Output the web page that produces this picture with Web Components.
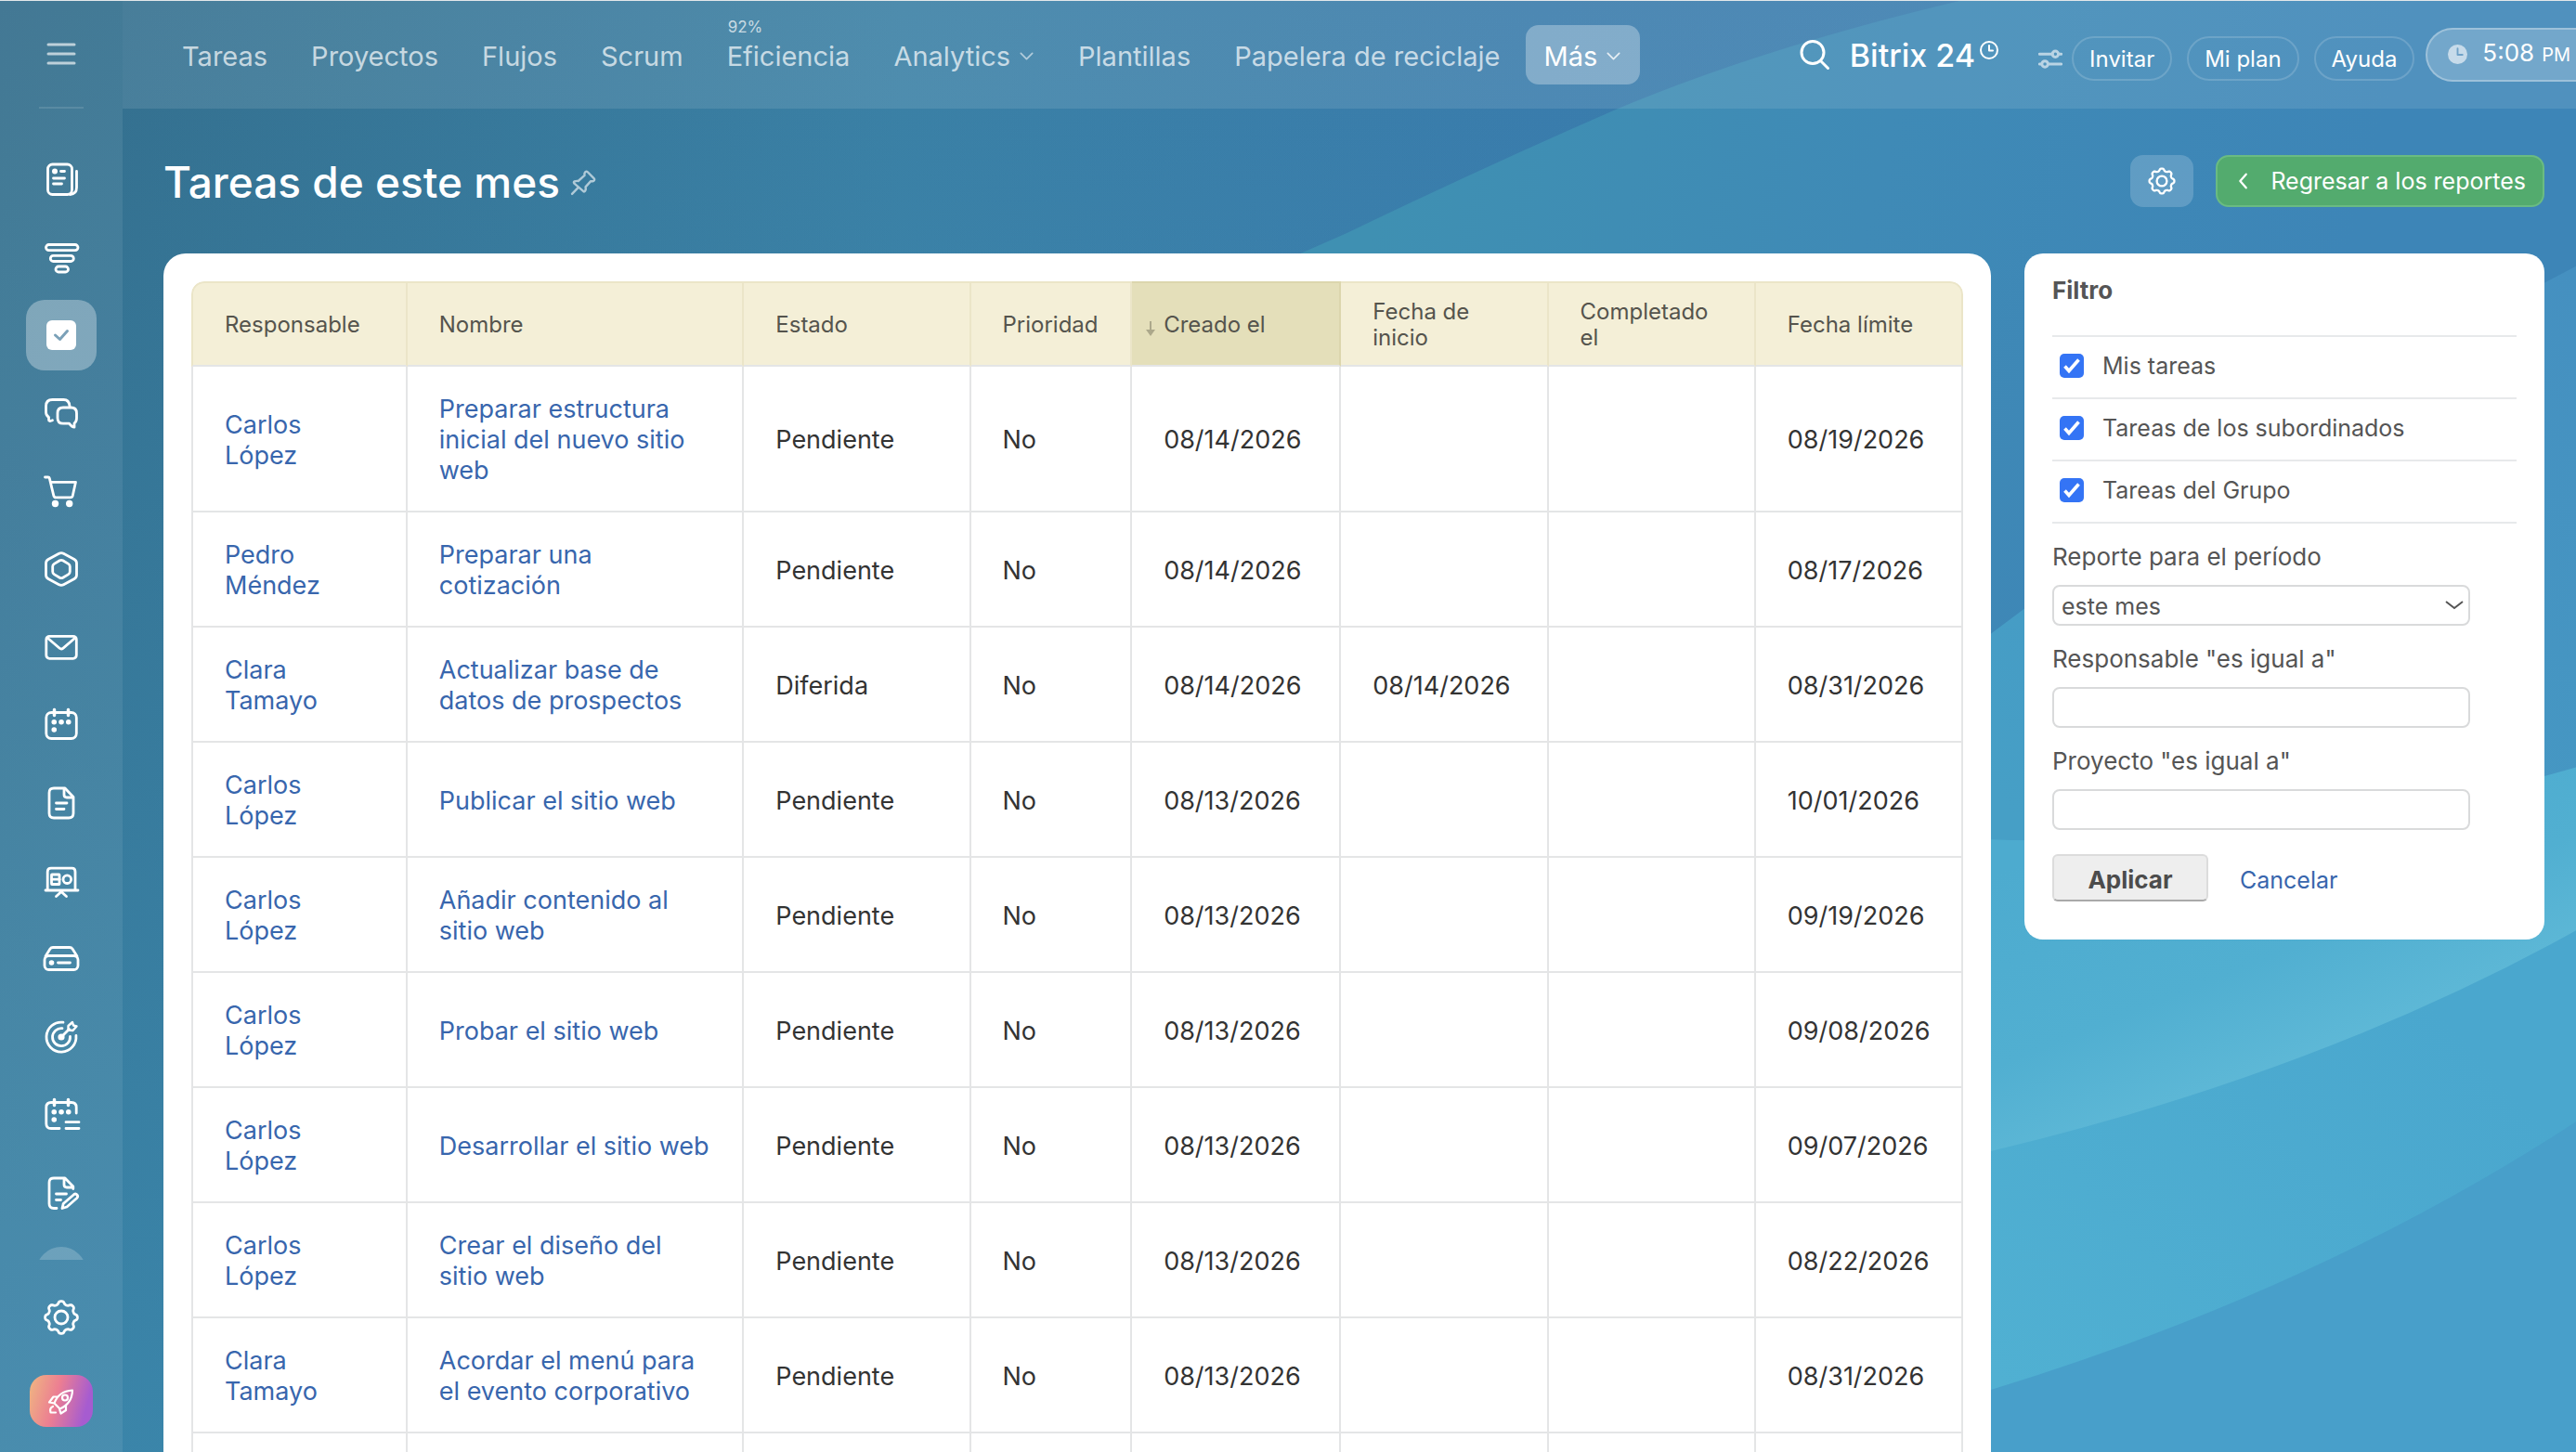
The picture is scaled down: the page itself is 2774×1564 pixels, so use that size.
<!DOCTYPE html>
<html lang="es">
<head>
<meta charset="utf-8">
<title>Tareas de este mes</title>
<style>
  html, body {
    margin: 0;
    height: 100%;
    overflow: hidden;
  }
  body {
    font-family: Inter, "Liberation Sans", sans-serif;
    color: #333;
    background: #3a7fa6;
  }
</style>
</head>
<body>
<app-shell>
  <side-menu slot="side"></side-menu>
  <top-bar slot="top"></top-bar>
  <page-title slot="title">Tareas de este mes</page-title>
  <task-report slot="report"></task-report>
  <report-filter slot="filter"></report-filter>
</app-shell>

<script>
  // closed outline of a cog with eight soft teeth
  function cogPath(cx, cy, r, depth) {
    const points = [];
    for (let i = 0; i < 160; i++) {
      const t = (i / 160) * Math.PI * 2;
      const k = r + depth * Math.tanh(1.6 * Math.cos(8 * t));
      points.push(`${(cx + k * Math.sin(t)).toFixed(2)} ${(cy - k * Math.cos(t)).toFixed(2)}`);
    }
    return `M${points.join("L")}Z`;
  }

  const ICONS = {
    menu: '<path d="M8 12h28M8 22h28M8 32h28" stroke-width="3"/>',
    feed: '<rect x="7.500" y="6" width="26" height="32.500" rx="5"/><path d="M38.500 13.500V31q0 7-7 7.500"/><circle cx="15" cy="13.500" r="3" class="f"/><path d="M21.500 13.500h4M13.500 21h12M13.500 27h9"/>',
    crm: '<rect x="5.500" y="8.500" width="34.500" height="6.200" rx="3.100"/><rect x="10.300" y="20.300" width="25" height="6.200" rx="3.100"/><rect x="16" y="32" width="13.500" height="6" rx="3"/>',
    tasks: '<rect x="6" y="6" width="32" height="32" rx="6" class="f"/><path d="M15.500 22l5 4.500 8-9" stroke="#7ba1b8" stroke-width="3"/>',
    chat: '<path d="M31 14.500Q30.500 7.500 24.500 7.500H12.500Q5.500 7.500 5.500 14.500V21Q5.500 24.500 8.500 26.500V29Q8.500 31.500 12.500 29.800"/><path d="M24 16h8.500q6 0 6 6v5.500q0 3.500-2.500 5.500v4.200q-2.500 0-5.500-4H24q-6 0-6-6V22q0-6 6-6z"/>',
    cart: '<path d="M4.500 7h3.300q1.200 0 1.500 1.200l4.500 18.600q.5 2 2.500 2h15.500q2 0 2.500-2l3.200-14.500H10.500"/><circle cx="15.500" cy="35.500" r="3.700" class="f"/><circle cx="30.700" cy="35.500" r="3.700" class="f"/>',
    hex: '<path d="M19.500 5.300q2.500-1.300 5 0L36 11.500q2.500 1.400 2.500 4.200v12.600q0 2.800-2.500 4.200L24.500 38.700q-2.500 1.300-5 0L8 32.500q-2.500-1.400-2.500-4.200V15.700q0-2.800 2.500-4.200z"/><path d="M20.300 12.800q1.700-1 3.400 0l6 3.600q1.600 1 1.600 2.800v5.600q0 1.800-1.600 2.800l-6 3.600q-1.700 1-3.400 0l-6-3.600q-1.600-1-1.600-2.800v-5.600q0-1.800 1.600-2.800z"/>',
    mail: '<rect x="5.800" y="10.300" width="32.500" height="24" rx="3.500"/><path d="M7 12l13.200 11.300q1.800 1.500 3.600 0L37 12"/>',
    calendar: '<rect x="5.800" y="8.500" width="32.500" height="28" rx="5.500"/><path d="M14.500 5.500v6M29.500 5.500v6" stroke-width="3.500"/><path d="M14.200 18.700h.1M22 18.700h.1M29.700 18.700h.1M14.200 27h.1" stroke-width="5.500"/>',
    doc: '<path d="M14 6h12l9 9.500V33q0 5-5 5H14q-5 0-5-5V11q0-5 5-5z"/><path d="M25 7v6q0 3 3 3h6.500M16.500 22h11.500M16.500 28.500h8.500"/>',
    board: '<path d="M7.200 31V12q0-3.800 3.800-3.800h22.500q3.500 0 3.500 3.800V31M5 32h35M22 33.500l-5.500 5M22 33.500l5.500 5"/><rect x="11.500" y="15" width="8.500" height="10.500" rx=".500"/><path d="M12 20.200h8"/><circle cx="28.300" cy="20.200" r="4.300"/>',
    drive: '<path d="M5 19l5-8q1-1.500 3-1.500h18q2 0 3 1.500l5 8"/><rect x="4" y="18.500" width="36" height="15" rx="4.500"/><circle cx="11.500" cy="26" r="2.800" class="f"/><path d="M18.500 26h13"/>',
    target: '<path d="M24 6.200A16 16 0 1 0 37.900 20.500M23 12.700A9.500 9.500 0 1 0 31.500 21.500M23 21l7.500-7.500"/><circle cx="22" cy="22" r="3.600" class="f"/><path d="M29.500 14.500V10l4.500-4 1 3.500 3.500 1-4 4.500z" stroke-width="2.400"/>',
    plan: '<path d="M20 36.500h-9q-5.200 0-5.200-5.300V13.700Q5.800 8.500 11 8.500h22q5.200 0 5.200 5.200V20M27 29.700h14M27 36.500h14"/><path d="M14.500 5.500v6M29.500 5.500v6" stroke-width="3.500"/><path d="M14.200 18.700h.1M22 18.700h.1M29.700 18.700h.1M14.200 27h.1" stroke-width="5.500"/>',
    sign: '<path d="M17 38.500h-3q-5 0-5-5V11q0-5 5-5h12l8.800 9v2.500M25 7v6q0 3 3 3h6M16.500 23h11M16.500 29.500h5"/><path d="M23 38.500l1.200-5 11.300-9.800q2-1.500 3.500.3t-.2 3.500L28 37z"/>',
    cog: `<path d="${cogPath(22, 22, 15.8, 1.7)}"/><circle cx="22" cy="22" r="7"/>`,
    rocket: '<path d="M14.500 24.500Q19 11.500 34 10.500 33.500 25 20.500 30.500zM18.500 17.500h-5l-4.500 6 5.500 1M27 26.500v5.500l-5.500 3.500-1.500-5M13 28q-4 1.500-2.500 6.500h5.500"/><circle cx="26" cy="18.500" r="3"/>',
    pin: '<path d="M9.800 22.800q-1.500-1.700.3-2.600 2.200-1 4.600-.5L22.600 12.700q-.6-2.300.5-3.900 1.500-2.100 3.300-.4l7.800 7.900q1.700 1.900-.5 3.200-1.600.8-3.400.4L23.800 27q.7 2.600-.4 4.800-1 2-2.500.5zM14.500 28L7 35.800"/>',
    search: '<circle cx="20" cy="19.500" r="12"/><path d="M28.500 28.500l8 8"/>',
    clock: '<circle cx="22" cy="22" r="18"/><path d="M22 12v11h8"/>',
    clockSolid: '<circle cx="22" cy="22" r="22" class="f"/><path d="M22 9v14h11" stroke="#6f9fc7" stroke-width="4"/>',
    sliders: '<path d="M2 14h24M38 14h4M2 32h4M18 32h24"/><circle cx="31" cy="14" r="5.500"/><circle cx="12" cy="32" r="5.500"/>',
    down: '<path d="M6 14l16 16 16-16"/>',
    left: '<path d="M28 6L14 22l14 16"/>'
  };

  class UiIcon extends HTMLElement {
    constructor() {
      super();
      this.attachShadow({ mode: "open" });
    }

    connectedCallback() {
      this.shadowRoot.innerHTML = `
        <style>
          :host { display: inline-block; flex: none; width: 44px; height: 44px; }
          svg {
            display: block;
            width: 100%;
            height: 100%;
            fill: none;
            stroke: currentColor;
            stroke-width: var(--stroke, 2.8);
            stroke-linecap: round;
            stroke-linejoin: round;
          }
          .f { fill: currentColor; stroke: none; }
        </style>
        <svg viewBox="0 0 44 44" aria-hidden="true">${ICONS[this.getAttribute("name")] || ""}</svg>
      `;
    }
  }

  class PageBackdrop extends HTMLElement {
    constructor() {
      super();
      this.attachShadow({ mode: "open" });
    }

    connectedCallback() {
      this.shadowRoot.innerHTML = `
        <style>
          :host { display: block; }
          svg { display: block; width: 100%; height: 100%; }
        </style>
        <svg viewBox="0 0 2774 1564" preserveAspectRatio="none" aria-hidden="true">
          <defs>
            <linearGradient id="base" x1="0" y1="0" x2="1" y2="0">
              <stop offset="0" stop-color="#336d8b"/>
              <stop offset=".35" stop-color="#3a7fa4"/>
              <stop offset=".6" stop-color="#397bab"/>
              <stop offset="1" stop-color="#3b80b4"/>
            </linearGradient>
            <linearGradient id="low" x1="0" y1="0" x2="0" y2="1">
              <stop offset="0" stop-color="#419ac4" stop-opacity="0"/>
              <stop offset="1" stop-color="#419ac4" stop-opacity=".5"/>
            </linearGradient>
            <linearGradient id="sweep" gradientUnits="userSpaceOnUse" x1="1500" y1="150" x2="2500" y2="400">
              <stop offset="0" stop-color="#3f90b2"/>
              <stop offset=".5" stop-color="#3f8ab6"/>
              <stop offset="1" stop-color="#3d85b7"/>
            </linearGradient>
            <linearGradient id="mid" gradientUnits="userSpaceOnUse" x1="2144" y1="850" x2="2774" y2="300">
              <stop offset="0" stop-color="#469fc6"/>
              <stop offset="1" stop-color="#4590c0"/>
            </linearGradient>
            <linearGradient id="sea" gradientUnits="userSpaceOnUse" x1="2300" y1="880" x2="2420" y2="1180">
              <stop offset="0" stop-color="#4dabcf"/>
              <stop offset=".6" stop-color="#51afd1"/>
              <stop offset="1" stop-color="#5fb9d7"/>
            </linearGradient>
            <linearGradient id="deep" gradientUnits="userSpaceOnUse" x1="2144" y1="1480" x2="2600" y2="1060">
              <stop offset="0" stop-color="#50b0d2"/>
              <stop offset="1" stop-color="#4aa7ce"/>
            </linearGradient>
          </defs>
          <rect width="2774" height="1564" fill="url(#base)"/>
          <rect width="2774" height="1564" fill="url(#low)"/>
          <path d="M1360 290L1451 250Q1600 178 1740 117 1900 50 2110 0H2774V1564H1360Z" fill="url(#sweep)"/>
          <path d="M2100 716Q2400 480 2774 286V1564H2100Z" fill="url(#mid)"/>
          <path d="M2100 902Q2450 920 2774 826V1564H2100Z" fill="url(#sea)"/>
          <path d="M2100 1250Q2480 1165 2774 1002V1564H2100Z" fill="url(#deep)"/>
          <path d="M2100 1510Q2480 1400 2774 1208V1564H2100Z" fill="#489fca"/>
        </svg>
      `;
    }
  }

  class AppShell extends HTMLElement {
    constructor() {
      super();
      this.attachShadow({ mode: "open" });
    }

    connectedCallback() {
      this.shadowRoot.innerHTML = `
        <style>
          :host {
            display: flex;
            position: relative;
            box-sizing: border-box;
            height: 100vh;
            overflow: hidden;
            border-top: 1px solid #e3e7ea;
          }
          page-backdrop { position: absolute; inset: 0; z-index: -1; }
          main { flex: 1; min-width: 0; }
          .content { padding: 50px 34px 0 44px; }
          .columns { display: flex; align-items: flex-start; gap: 36px; margin-top: 50px; }
          slot[name="report"]::slotted(*) { flex: 1; min-width: 0; }
          slot[name="filter"]::slotted(*) { flex: none; }
        </style>
        <page-backdrop></page-backdrop>
        <slot name="side"></slot>
        <main>
          <slot name="top"></slot>
          <div class="content">
            <slot name="title"></slot>
            <div class="columns">
              <slot name="report"></slot>
              <slot name="filter"></slot>
            </div>
          </div>
        </main>
      `;
    }
  }

  class SideMenu extends HTMLElement {
    constructor() {
      super();
      this.attachShadow({ mode: "open" });
      this.items = [
        ["feed", "Noticias"], ["crm", "CRM"], ["tasks", "Tareas"], ["chat", "Chat"],
        ["cart", "Tienda"], ["hex", "Automatización"], ["mail", "Correo"],
        ["calendar", "Calendario"], ["doc", "Documentos"], ["board", "Pizarras"],
        ["drive", "Drive"], ["target", "Marketing"], ["plan", "Reservas"], ["sign", "Firma"]
      ];
    }

    connectedCallback() {
      this.shadowRoot.innerHTML = `
        <style>
          :host {
            display: flex;
            flex-direction: column;
            align-items: center;
            box-sizing: border-box;
            flex: none;
            width: 132px;
            padding-bottom: 27px;
            color: #fff;
            background: rgba(255, 255, 255, .08);
          }
          button { padding: 0; border: 0; color: inherit; background: none; }
          .toggle { height: 114px; padding-top: 3px; opacity: .65; }
          hr { width: 48px; height: 2px; margin: 0 0 38px; border: 0; background: rgba(255, 255, 255, .12); }
          nav { display: flex; flex-direction: column; gap: 8px; }
          nav a {
            display: flex;
            align-items: center;
            justify-content: center;
            width: 76px;
            height: 76px;
            border-radius: 20px;
            color: inherit;
          }
          nav a.active { background: rgba(255, 255, 255, .32); }
          .more { width: 54px; height: 14px; margin-top: 20px; overflow: hidden; }
          .more span { display: block; width: 54px; height: 54px; border-radius: 50%; background: rgba(255, 255, 255, .2); }
          .bottom { display: flex; flex-direction: column; align-items: center; gap: 40px; margin-top: auto; }
          .bottom button { display: block; height: 44px; }
          .bottom .launch {
            display: flex;
            align-items: center;
            justify-content: center;
            width: 68px;
            height: 56px;
            border-radius: 18px;
            background: linear-gradient(105deg, #efb083 5%, #ec7e92 42%, #a65cd0 85%);
          }
          .launch ui-icon { --stroke: 2.2; }
        </style>
        <button class="toggle" aria-label="Menú"><ui-icon name="menu"></ui-icon></button>
        <hr>
        <nav>
          ${this.items.map(([icon, label]) => `
            <a href="#${icon}" aria-label="${label}" class="${icon === "tasks" ? "active" : ""}">
              <ui-icon name="${icon}"></ui-icon>
            </a>`).join("")}
        </nav>
        <div class="more"><span></span></div>
        <div class="bottom">
          <button aria-label="Ajustes"><ui-icon name="cog"></ui-icon></button>
          <button class="launch" aria-label="Novedades"><ui-icon name="rocket"></ui-icon></button>
        </div>
      `;
    }
  }

  class NavItem extends HTMLElement {
    constructor() {
      super();
      this.attachShadow({ mode: "open" });
    }

    connectedCallback() {
      const badge = this.getAttribute("badge");
      this.shadowRoot.innerHTML = `
        <style>
          :host { display: block; flex: none; }
          a {
            display: flex;
            align-items: center;
            gap: 9px;
            position: relative;
            box-sizing: border-box;
            height: 64px;
            padding: 2px 20px 0;
            border-radius: 14px;
            font-size: 29px;
            white-space: nowrap;
            text-decoration: none;
            color: rgba(255, 255, 255, .7);
          }
          :host([active]) a { color: #fff; background: rgba(255, 255, 255, .3); }
          ui-icon { width: 17px; height: 17px; --stroke: 4.5; opacity: .8; }
          small { position: absolute; left: 21px; top: -10px; font-size: 17px; line-height: 24px; }
        </style>
        <a href="#">
          ${badge ? `<small>${badge}</small>` : ""}
          <slot></slot>
          ${this.hasAttribute("menu") ? '<ui-icon name="down"></ui-icon>' : ""}
        </a>
      `;
    }
  }

  class TopBar extends HTMLElement {
    constructor() {
      super();
      this.attachShadow({ mode: "open" });
    }

    connectedCallback() {
      this.shadowRoot.innerHTML = `
        <style>
          :host {
            display: flex;
            align-items: center;
            height: 116px;
            padding-left: 44px;
            color: #fff;
            background: rgba(255, 255, 255, .1);
          }
          nav { display: flex; gap: 7px; }
          .tools { display: flex; align-items: center; flex: none; margin-left: auto; white-space: nowrap; }
          button { padding: 0; border: 0; font: inherit; color: inherit; background: none; }
          .search { height: 44px; }
          .search ui-icon { --stroke: 3; }
          .brand {
            display: flex;
            margin: 0 42px 0 16px;
            padding-top: 2px;
            font-size: 34px;
            font-weight: 500;
            line-height: 44px;
            color: #fff;
            text-decoration: none;
          }
          .brand ui-icon { width: 22px; height: 22px; margin: 5px 0 0 4px; --stroke: 4; }
          .pills { display: flex; align-items: center; gap: 16px; margin-top: 8px; }
          .pills ui-icon { width: 26px; height: 26px; margin-right: -6px; --stroke: 5; opacity: .6; }
          .pills button {
            box-sizing: border-box;
            height: 48px;
            padding: 0 17px;
            border: 2px solid rgba(255, 255, 255, .16);
            border-radius: 24px;
            font-size: 24px;
          }
          .time {
            display: flex;
            align-items: center;
            box-sizing: border-box;
            height: 58px;
            margin-left: 12px;
            padding: 0 6px 2px 22px;
            border: 2px solid rgba(255, 255, 255, .3);
            border-right: 0;
            border-radius: 29px 0 0 29px;
            background: rgba(255, 255, 255, .2);
          }
          .time ui-icon { width: 21px; height: 21px; margin-right: 16px; opacity: .6; }
          .time span { font-size: 26px; line-height: 34px; }
          .time small { margin-left: 8px; font-size: 20px; }
        </style>
        <nav>
          <nav-item>Tareas</nav-item>
          <nav-item>Proyectos</nav-item>
          <nav-item>Flujos</nav-item>
          <nav-item>Scrum</nav-item>
          <nav-item badge="92%">Eficiencia</nav-item>
          <nav-item menu>Analytics</nav-item>
          <nav-item>Plantillas</nav-item>
          <nav-item>Papelera de reciclaje</nav-item>
          <nav-item menu active>Más</nav-item>
        </nav>
        <div class="tools">
          <button class="search" aria-label="Buscar"><ui-icon name="search"></ui-icon></button>
          <a class="brand" href="#">Bitrix 24<ui-icon name="clock"></ui-icon></a>
          <div class="pills">
            <ui-icon name="sliders"></ui-icon>
            <button>Invitar</button>
            <button>Mi plan</button>
            <button>Ayuda</button>
          </div>
          <button class="time"><ui-icon name="clockSolid"></ui-icon><span>5:08<small>PM</small></span></button>
        </div>
      `;
    }
  }

  class PageTitle extends HTMLElement {
    constructor() {
      super();
      this.attachShadow({ mode: "open" });
    }

    connectedCallback() {
      this.shadowRoot.innerHTML = `
        <style>
          :host { display: flex; align-items: center; height: 56px; color: #fff; }
          h1 { margin: 0; padding-top: 2px; font-size: 46px; font-weight: 500; line-height: 56px; white-space: nowrap; }
          .pin { padding: 4px 0 0; margin-left: 7px; border: 0; color: inherit; background: none; opacity: .6; }
          .pin ui-icon { display: block; width: 38px; height: 38px; }
          .gear {
            display: flex;
            align-items: center;
            justify-content: center;
            width: 68px;
            height: 56px;
            margin: 0 24px 0 auto;
            padding: 0;
            border: 0;
            border-radius: 14px;
            color: #fff;
            background: rgba(255, 255, 255, .18);
          }
          .gear ui-icon { width: 34px; height: 34px; --stroke: 3; }
          .back {
            display: flex;
            align-items: center;
            gap: 19px;
            box-sizing: border-box;
            height: 56px;
            padding: 0 18px;
            border: 2px solid #6abb82;
            border-radius: 14px;
            font-size: 25px;
            white-space: nowrap;
            text-decoration: none;
            color: #fff;
            background: #53ab6e;
          }
          .back ui-icon { width: 20px; height: 20px; --stroke: 5; }
        </style>
        <h1><slot></slot></h1>
        <button class="pin" aria-label="Fijar"><ui-icon name="pin"></ui-icon></button>
        <button class="gear" aria-label="Configurar"><ui-icon name="cog"></ui-icon></button>
        <a class="back" href="#"><ui-icon name="left"></ui-icon>Regresar a los reportes</a>
      `;
    }
  }

  class TaskReport extends HTMLElement {
    constructor() {
      super();
      this.attachShadow({ mode: "open" });
      this.columns = [
        ["Responsable", 12.2], ["Nombre", 19], ["Estado", 12.8], ["Prioridad", 9.1],
        ["Creado el", 11.8], ["Fecha de inicio", 11.7], ["Completado el", 11.7], ["Fecha límite", 11.7]
      ];
      this.rows = [
        ["Carlos López", "Preparar estructura inicial del nuevo sitio web", "Pendiente", "No", "08/14/2026", "", "", "08/19/2026"],
        ["Pedro Méndez", "Preparar una cotización", "Pendiente", "No", "08/14/2026", "", "", "08/17/2026"],
        ["Clara Tamayo", "Actualizar base de datos de prospectos", "Diferida", "No", "08/14/2026", "08/14/2026", "", "08/31/2026"],
        ["Carlos López", "Publicar el sitio web", "Pendiente", "No", "08/13/2026", "", "", "10/01/2026"],
        ["Carlos López", "Añadir contenido al sitio web", "Pendiente", "No", "08/13/2026", "", "", "09/19/2026"],
        ["Carlos López", "Probar el sitio web", "Pendiente", "No", "08/13/2026", "", "", "09/08/2026"],
        ["Carlos López", "Desarrollar el sitio web", "Pendiente", "No", "08/13/2026", "", "", "09/07/2026"],
        ["Carlos López", "Crear el diseño del sitio web", "Pendiente", "No", "08/13/2026", "", "", "08/22/2026"],
        ["Clara Tamayo", "Acordar el menú para el evento corporativo", "Pendiente", "No", "08/13/2026", "", "", "08/31/2026"],
        ["", "", "", "", "", "", "", ""]
      ];
    }

    connectedCallback() {
      this.shadowRoot.innerHTML = `
        <style>
          :host { display: block; padding: 30px; border-radius: 24px; background: #fff; }
          table {
            width: 100%;
            table-layout: fixed;
            border-collapse: separate;
            border-spacing: 0;
            border-radius: 14px 14px 0 0;
            overflow: hidden;
          }
          th, td {
            box-sizing: border-box;
            border: 0 solid #e4e5e6;
            border-width: 0 2px 2px 0;
            text-align: left;
            vertical-align: middle;
          }
          th:first-child, td:first-child { border-left-width: 2px; }
          th:first-child { border-top-left-radius: 14px; }
          th:last-child { border-top-right-radius: 14px; }
          th {
            position: relative;
            height: 92px;
            padding: 2px 34px 0;
            border-top-width: 2px;
            border-color: #ebe5c8;
            border-bottom-color: #e4e5e6;
            font-size: 24px;
            font-weight: 400;
            line-height: 28px;
            color: #55544d;
            background: #f4efd7;
          }
          th.sorted { border-color: #dcd6ad; border-bottom-color: #e4e5e6; background: #e4dfba; }
          th svg { position: absolute; left: 14px; top: 40px; width: 12px; height: 18px; }
          td { height: 124px; padding: 29px 34px 27px; font-size: 27px; line-height: 33px; }
          td:nth-child(2) { padding-right: 28px; }
          a { color: #3866ad; text-decoration: none; }
        </style>
        <table>
          <colgroup>
            ${this.columns.map(([, width]) => `<col style="width: ${width}%">`).join("")}
          </colgroup>
          <thead>
            <tr>${this.columns.map(([label]) => this.heading(label)).join("")}</tr>
          </thead>
          <tbody>
            ${this.rows.map((row) => `<tr>${row.map((text, i) => this.cell(text, i)).join("")}</tr>`).join("")}
          </tbody>
        </table>
      `;
    }

    heading(label) {
      if (label !== "Creado el") return `<th>${label}</th>`;
      return `
        <th class="sorted" aria-sort="descending">
          <svg viewBox="0 0 12 18" aria-hidden="true"><path d="M5 1h2v9h4l-5 7-5-7h4z" fill="#aca88b"/></svg>${label}
        </th>`;
    }

    cell(text, i) {
      if (i < 2 && text) return `<td><a href="#">${text}</a></td>`;
      return `<td>${text}</td>`;
    }
  }

  class ReportFilter extends HTMLElement {
    constructor() {
      super();
      this.attachShadow({ mode: "open" });
      this.scopes = ["Mis tareas", "Tareas de los subordinados", "Tareas del Grupo"];
    }

    connectedCallback() {
      this.shadowRoot.innerHTML = `
        <style>
          :host {
            display: block;
            box-sizing: border-box;
            width: 560px;
            padding: 20px 30px 41px;
            border-radius: 20px;
            font-size: 25px;
            color: #555;
            background: #fff;
          }
          h2 { margin: 0 0 28px; font-size: 26px; line-height: 40px; }
          .scopes { border-top: 2px solid #e7e9eb; }
          .scopes label {
            display: flex;
            align-items: center;
            gap: 20px;
            box-sizing: border-box;
            height: 67px;
            padding: 0 0 3px 8px;
            border-bottom: 2px solid #e7e9eb;
          }
          .scopes input {
            appearance: none;
            width: 26px;
            height: 26px;
            margin: 0;
            border-radius: 5px;
            background: #3474f5 url("data:image/svg+xml,%3Csvg xmlns='http://www.w3.org/2000/svg' viewBox='0 0 26 26'%3E%3Cpath d='M5.500 13.500l4.500 5L20.500 6.500' fill='none' stroke='%23fff' stroke-width='3.600'/%3E%3C/svg%3E");
          }
          .fields { padding-top: 20px; }
          .field { display: flex; flex-direction: column; align-items: flex-start; gap: 14px; margin-bottom: 20px; }
          .field label { font-size: 26px; line-height: 32px; }
          .field input, .field select {
            box-sizing: border-box;
            width: 90%;
            height: 44px;
            margin: 0;
            padding: 0 8px;
            border: 2px solid #d9dadb;
            border-radius: 8px;
            font: inherit;
            color: inherit;
            background: #fff;
          }
          .field select {
            appearance: none;
            padding-top: 2px;
            background: #fff url("data:image/svg+xml,%3Csvg xmlns='http://www.w3.org/2000/svg' viewBox='0 0 20 12'%3E%3Cpath d='M1 2l9 7 9-7' fill='none' stroke='%23555' stroke-width='2'/%3E%3C/svg%3E") no-repeat right 5px center / 20px 12px;
          }
          .actions { display: flex; align-items: center; gap: 34px; padding-top: 6px; }
          button {
            height: 51px;
            min-width: 168px;
            padding: 4px 0 0;
            border: 2px solid #dcdcdc;
            border-bottom-color: #a9a9a9;
            border-radius: 6px;
            font: inherit;
            font-size: 26px;
            font-weight: 700;
            color: #4c4c4c;
            background: #eee;
          }
          a { padding-top: 4px; color: #3866ad; text-decoration: none; }
        </style>
        <h2>Filtro</h2>
        <div class="scopes">
          ${this.scopes.map((label) => `<label><input type="checkbox" checked>${label}</label>`).join("")}
        </div>
        <div class="fields">
          <div class="field">
            <label for="period">Reporte para el período</label>
            <select id="period"><option>este mes</option></select>
          </div>
          <div class="field">
            <label for="owner">Responsable "es igual a"</label>
            <input id="owner" type="text">
          </div>
          <div class="field">
            <label for="project">Proyecto "es igual a"</label>
            <input id="project" type="text">
          </div>
        </div>
        <div class="actions">
          <button type="button">Aplicar</button>
          <a href="#">Cancelar</a>
        </div>
      `;
    }
  }

  customElements.define("ui-icon", UiIcon);
  customElements.define("page-backdrop", PageBackdrop);
  customElements.define("nav-item", NavItem);
  customElements.define("side-menu", SideMenu);
  customElements.define("top-bar", TopBar);
  customElements.define("page-title", PageTitle);
  customElements.define("task-report", TaskReport);
  customElements.define("report-filter", ReportFilter);
  customElements.define("app-shell", AppShell);
</script>
</body>
</html>
